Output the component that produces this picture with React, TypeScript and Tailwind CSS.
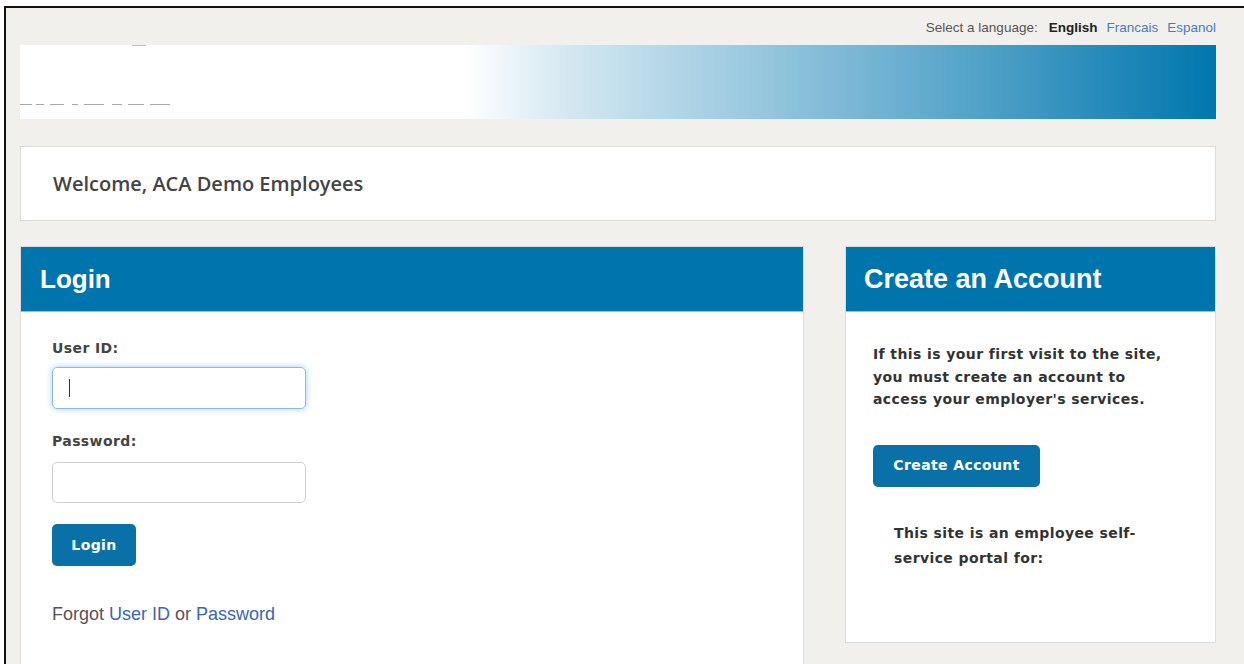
import React from 'react';

const sans = "font-['Liberation_Sans',Arial,sans-serif]";
const verdana = "font-['DejaVu_Sans',Verdana,sans-serif] tracking-[0.4px]";

const LanguagePicker: React.FC = () => (
  <div className={`h-[37px] flex justify-end items-start pt-[12px] text-[13.5px] leading-[16px] ${sans}`}>
    <span className="text-[#555]">Select a language:</span>
    <span className="ml-[11px] font-bold text-[#222]">English</span>
    <a className="ml-[9px] text-[#4a78c8]" href="#">Francais</a>
    <a className="ml-[9px] text-[#4a78c8]" href="#">Espanol</a>
  </div>
);

// slivers of the cropped logo artwork peeking out of the banner
const logoBits = [
  { l: 0, w: 12 }, { l: 16, w: 8 }, { l: 30, w: 14 }, { l: 52, w: 6 },
  { l: 64, w: 20 }, { l: 92, w: 10 }, { l: 108, w: 16 }, { l: 130, w: 20 },
];

const Banner: React.FC = () => (
  <div className="relative h-[74px] bg-[linear-gradient(to_right,#ffffff_0%,#ffffff_37%,#d3e7f1_46%,#5aa6cb_78%,#0077ae_100%)] overflow-hidden">
    <div className="absolute left-[112px] top-0 w-[14px] h-px bg-[#b8c0cc]" />
    {logoBits.map((b, i) => (
      <div key={i} className="absolute top-[59px] h-px bg-[#a8a8a8]" style={{ left: b.l, width: b.w }} />
    ))}
  </div>
);

const Panel: React.FC<{ title: string; titleClass: string; className?: string; children: React.ReactNode }> = ({
  title,
  titleClass,
  className,
  children,
}) => (
  <section className={`flex flex-col border border-[#dcdcdc] bg-white ${className ?? ''}`}>
    <header className="h-[65px] bg-[#0074ad] flex items-center border-b border-[#7cc6ea]">
      <h2 className={`text-white font-bold ${sans} ${titleClass}`}>{title}</h2>
    </header>
    {children}
  </section>
);

const App: React.FC = () => {
  return (
    <div className="w-[1244px] h-[664px] bg-white pt-[6px] pl-[4px] overflow-hidden">
      <div className="h-full border-l-2 border-t-2 border-[#111] bg-[#f2f0ec] pl-[14px] pr-[28px]">
        <LanguagePicker />
        <Banner />

        <div className="mt-[27px] h-[75px] bg-white border border-[#dddad4] flex items-center pl-[32px]">
          <h1 className="font-['Open_Sans',sans-serif] font-semibold text-[20px] text-[#444]">
            Welcome, ACA Demo Employees
          </h1>
        </div>

        <div className="mt-[25px] flex items-start gap-[41px]">
          <Panel title="Login" titleClass="pl-[19px] text-[26px]" className="w-[784px] h-[440px]">
            <div className={`pl-[31px] pt-[27px] ${verdana}`}>
              <label className="block text-[14px] leading-[18px] font-bold text-[#444]">User ID:</label>
              <div className="mt-[10px] w-[254px] h-[42px] rounded-[5px] border border-[#8dbbe3] shadow-[0_0_6px_rgba(102,175,233,0.6)] flex items-center pl-[16px]">
                <span className="w-px h-[18px] bg-[#333]" />
              </div>
              <label className="block mt-[23px] text-[14px] leading-[18px] font-bold text-[#444]">Password:</label>
              <div className="mt-[12px] w-[254px] h-[41px] rounded-[5px] border border-[#cfcfcf]" />
              <button className="mt-[21px] w-[84px] h-[42px] rounded-[5px] bg-[#0a71a8] text-white font-bold text-[14px]">
                Login
              </button>
              <p className={`mt-[39px] text-[18px] leading-[18px] tracking-normal text-[#555] ${sans}`}>
                Forgot <a href="#" className="text-[#3b64b3]">User ID</a> or{' '}
                <a href="#" className="text-[#3b64b3]">Password</a>
              </p>
            </div>
          </Panel>

          <Panel title="Create an Account" titleClass="pl-[18px] text-[27px]" className="w-[371px] h-[397px]">
            <div className={`pl-[27px] pt-[31px] ${verdana}`}>
              <p className="w-[310px] text-[14px] leading-[22.5px] font-bold text-[#333]">
                If this is your first visit to the site, you must create an account to access your employer's services.
              </p>
              <button className="mt-[34px] w-[167px] h-[42px] rounded-[5px] bg-[#0a71a8] text-white font-bold text-[14px]">
                Create Account
              </button>
              <p className="mt-[34px] ml-[21px] w-[262px] text-[14px] leading-[25px] font-bold text-[#333]">
                This site is an employee self-service portal for:
              </p>
            </div>
          </Panel>
        </div>
      </div>
    </div>
  );
};

export default App;
